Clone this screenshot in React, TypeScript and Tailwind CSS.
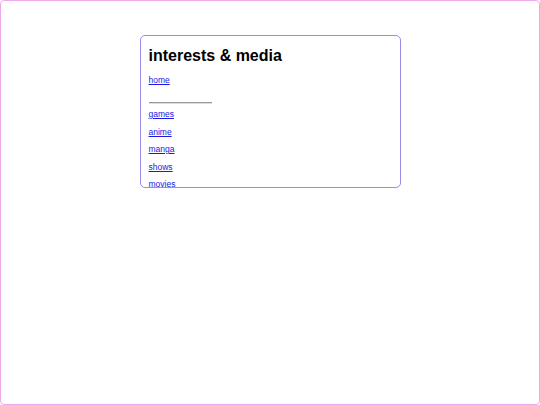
import React from "react";

export default function App() {
  const links = ["games", "anime", "manga", "shows", "movies"];
  return (
    <div
      className="w-[540px] h-[405px] bg-white border border-[#f0a8ec] rounded-[4px] flex justify-center pt-[34px]"
      style={{ fontFamily: '"Liberation Sans", Arial, sans-serif' }}
    >
      <div className="w-[261px] h-[153px] border border-[#9a8ce4] rounded-[5px] overflow-hidden px-[8px] flex flex-col items-start">
        <h1 className="mt-[11px] text-[16px] leading-[18px] font-bold text-black">
          interests &amp; media
        </h1>
        <a href="#" className="mt-[10px] text-[8.5px] leading-[10px] text-[#1a1ae0] underline">
          home
        </a>
        <div className="mt-[17px] w-[63px] border-t border-t-[#9a9a9a] border-b border-b-[#dcdcdc]" />
        <div className="mt-[5px] flex flex-col items-start gap-[7.5px]">
          {links.map((l) => (
            <a key={l} href="#" className="text-[8.5px] leading-[10px] text-[#1a1ae0] underline">
              {l}
            </a>
          ))}
        </div>
      </div>
    </div>
  );
}
